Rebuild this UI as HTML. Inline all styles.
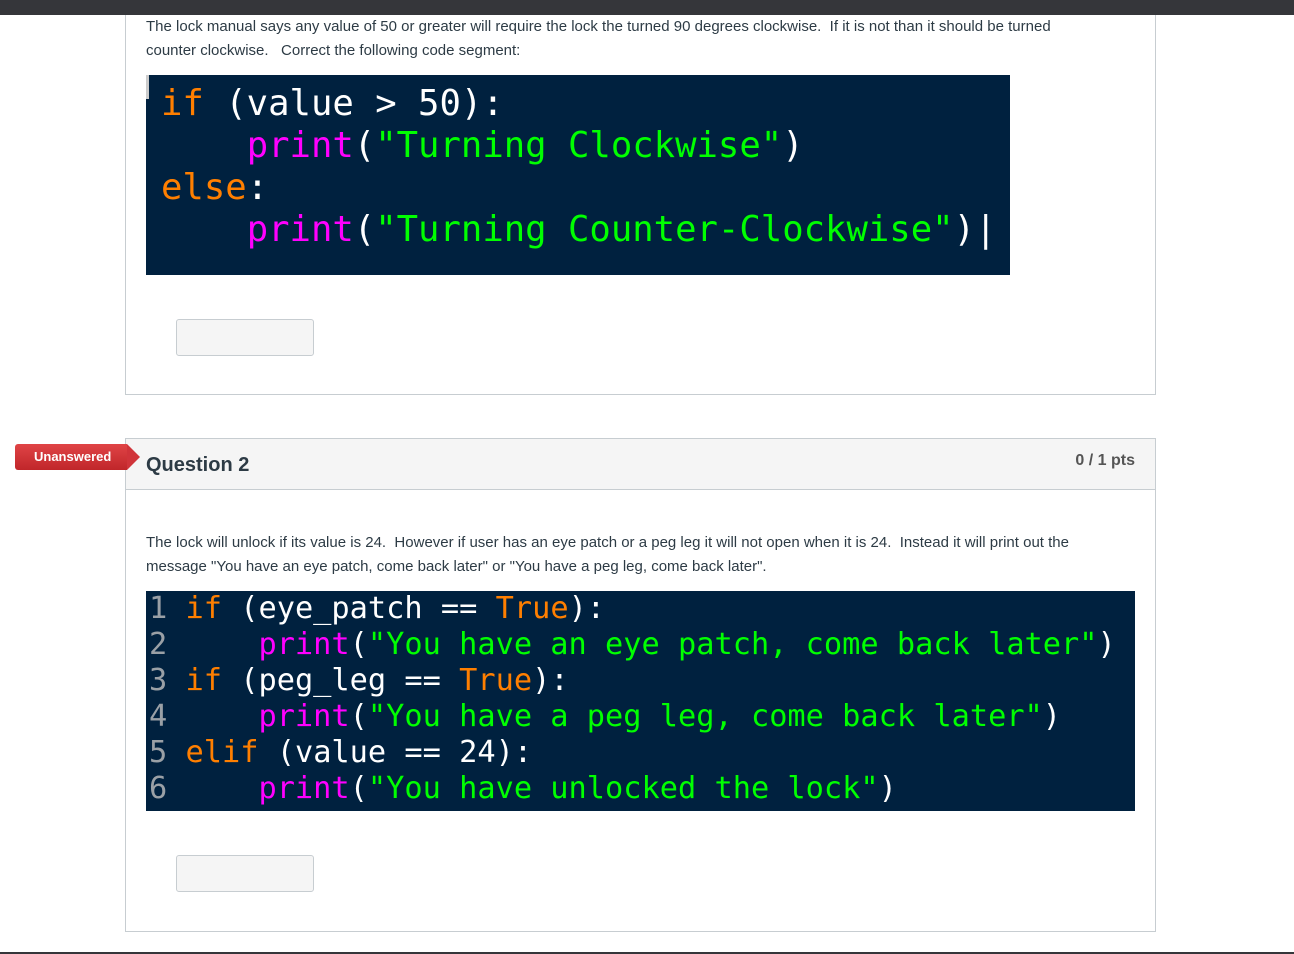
<!DOCTYPE html>
<html><head><style>
body{margin:0;width:1294px;height:954px;background:#fff;position:relative;overflow:hidden;font-family:"Liberation Sans",sans-serif;color:#2d3b45}
.abs{position:absolute}
.top{left:0;top:0;width:1294px;height:15px;background:#35363a}
.txt{font-size:15px;line-height:24px;color:#2d3b45;left:146px}
.code{background:#00213f;font-family:"DejaVu Sans Mono","Liberation Mono",monospace;color:#fff;white-space:pre}
.o{color:#ff7f00}.m{color:#ff00ff}.g{color:#00ff00}.n{color:#9aa0a6}
.btn{width:136px;height:35px;border:1px solid #c7cdd1;background:#f5f5f5;border-radius:3px}
</style></head><body>
<div class="abs top"></div>
<div class="abs" style="left:125px;top:15px;width:1029px;height:379px;border:1px solid #c7cdd1;border-top:none"></div>
<div class="abs txt" style="top:15px;width:950px">The lock manual says any value of 50 or greater will require the lock the turned 90 degrees clockwise.&nbsp; If it is not than it should be turned counter clockwise.&nbsp;&nbsp; Correct the following code segment:</div>
<div class="abs code" style="left:146px;top:75px;width:864px;height:200px;font-size:35.6px;line-height:42px;padding-left:15px;box-sizing:border-box;padding-top:8px"><span class="o">if</span> (value &gt; 50):
    <span class="m">print</span>(<span class="g">"Turning Clockwise"</span>)
<span class="o">else</span>:
    <span class="m">print</span>(<span class="g">"Turning Counter-Clockwise"</span>)|</div>
<div class="abs" style="left:146px;top:75px;width:3px;height:24px;background:#ccc"></div>
<div class="abs btn" style="left:176px;top:319px"></div>

<div class="abs" style="left:125px;top:438px;width:1029px;height:492px;border:1px solid #c7cdd1"></div>
<div class="abs" style="left:126px;top:439px;width:1029px;height:50px;background:#f5f5f5;border-bottom:1px solid #c7cdd1"></div>
<div class="abs" style="left:146px;top:453px;font-size:20px;font-weight:bold;color:#2d3b45;line-height:24px">Question 2</div>
<div class="abs" style="left:1040px;top:450px;width:95px;text-align:right;font-size:16px;font-weight:bold;color:#555;line-height:22px">0 / 1 pts</div>
<div class="abs" style="left:15px;top:444px;width:112px;height:26px;background:linear-gradient(#e04446,#c0262a);border-radius:3px 0 0 3px;color:#fff;font-weight:bold;font-size:13px;line-height:25px;text-indent:19px">Unanswered</div>
<div class="abs" style="left:127px;top:444px;width:0;height:0;border-top:13px solid transparent;border-bottom:13px solid transparent;border-left:13px solid #d0343a"></div>
<div class="abs txt" style="top:531px;width:975px">The lock will unlock if its value is 24.&nbsp; However if user has an eye patch or a peg leg it will not open when it is 24.&nbsp; Instead it will print out the message "You have an eye patch, come back later" or "You have a peg leg, come back later".</div>
<div class="abs code" style="left:146px;top:591px;width:989px;height:220px;font-size:30.3px;line-height:36px;padding-left:3px;box-sizing:border-box;padding-top:0px"><span class="n">1</span> <span class="o">if</span> (eye_patch == <span class="o">True</span>):
<span class="n">2</span>     <span class="m">print</span>(<span class="g">"You have an eye patch, come back later"</span>)
<span class="n">3</span> <span class="o">if</span> (peg_leg == <span class="o">True</span>):
<span class="n">4</span>     <span class="m">print</span>(<span class="g">"You have a peg leg, come back later"</span>)
<span class="n">5</span> <span class="o">elif</span> (value == 24):
<span class="n">6</span>     <span class="m">print</span>(<span class="g">"You have unlocked the lock"</span>)</div>
<div class="abs btn" style="left:176px;top:855px"></div>
<div class="abs" style="left:0;top:952px;width:1294px;height:2px;background:#35363a"></div>
</body></html>
